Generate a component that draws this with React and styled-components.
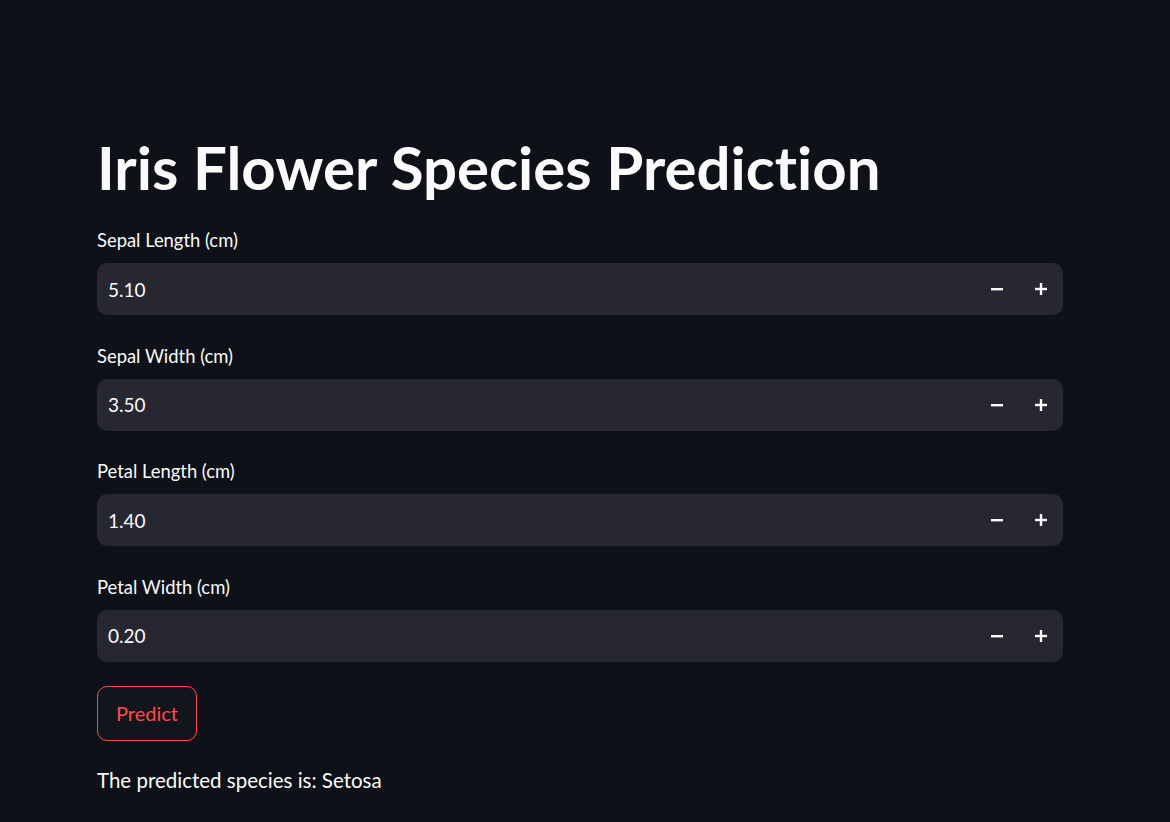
import React from "react";
import styled, { createGlobalStyle } from "styled-components";

const GlobalStyle = createGlobalStyle`
  html, body {
    margin: 0;
    padding: 0;
    background-color: #0e1117;
  }
  body {
    font-family: Lato, "Noto Sans", sans-serif;
    font-variant-ligatures: none;
    color: #fafafa;
  }
`;

const Page = styled.main`
  min-height: 822px;
  box-sizing: border-box;
  padding: 129px 0 0 97px;
`;

const Block = styled.div`
  width: 966px;
  display: flex;
  flex-direction: column;
`;

const Title = styled.h1`
  margin: 0 0 23px;
  font-size: 60px;
  font-weight: 700;
  line-height: 76px;
`;

const Field = styled.div`
  display: flex;
  flex-direction: column;
  margin-bottom: 28.5px;
`;

const Label = styled.label`
  font-size: 18.4px;
  line-height: 24px;
  margin-bottom: 11px;
  color: #fafafa;
`;

const InputBox = styled.div`
  height: 52px;
  display: flex;
  align-items: stretch;
  background-color: #262730;
  border-radius: 10px;
  overflow: hidden;
`;

const Value = styled.input`
  flex: 1;
  border: 0;
  outline: none;
  background: transparent;
  color: #fafafa;
  font-family: Lato, "Noto Sans", sans-serif;
  font-size: 19px;
  padding: 0 11px;
`;

const Step = styled.button`
  width: 44px;
  border: 0;
  background: transparent;
  color: #fafafa;
  display: flex;
  align-items: center;
  justify-content: center;
  padding: 0;
  cursor: pointer;
`;

const PredictButton = styled.button`
  align-self: flex-start;
  margin-top: -4.5px;
  height: 55px;
  padding: 0 18px;
  border: 1px solid #ff4b4b;
  border-radius: 10px;
  background-color: #12151c;
  color: #ff4b4b;
  font-family: Lato, "Noto Sans", sans-serif;
  font-size: 20px;
  cursor: pointer;
`;

const Result = styled.p`
  margin: 24px 0 0;
  font-size: 20.5px;
  line-height: 30px;
`;

const Minus = () => (
  <svg width="12" height="12" viewBox="0 0 12 12">
    <rect x="0" y="5" width="12" height="2.4" fill="currentColor" />
  </svg>
);

const Plus = () => (
  <svg width="12" height="12" viewBox="0 0 12 12">
    <rect x="0" y="4.8" width="12" height="2.4" fill="currentColor" />
    <rect x="4.8" y="0" width="2.4" height="12" fill="currentColor" />
  </svg>
);

const fields = [
  { label: "Sepal Length (cm)", value: "5.10" },
  { label: "Sepal Width (cm)", value: "3.50" },
  { label: "Petal Length (cm)", value: "1.40" },
  { label: "Petal Width (cm)", value: "0.20" },
];

export default function App() {
  return (
    <>
      <GlobalStyle />
      <Page>
        <Block>
          <Title>Iris Flower Species Prediction</Title>
          {fields.map((f) => (
            <Field key={f.label}>
              <Label>{f.label}</Label>
              <InputBox>
                <Value defaultValue={f.value} />
                <Step>
                  <Minus />
                </Step>
                <Step>
                  <Plus />
                </Step>
              </InputBox>
            </Field>
          ))}
          <PredictButton>Predict</PredictButton>
          <Result>The predicted species is: Setosa</Result>
        </Block>
      </Page>
    </>
  );
}
